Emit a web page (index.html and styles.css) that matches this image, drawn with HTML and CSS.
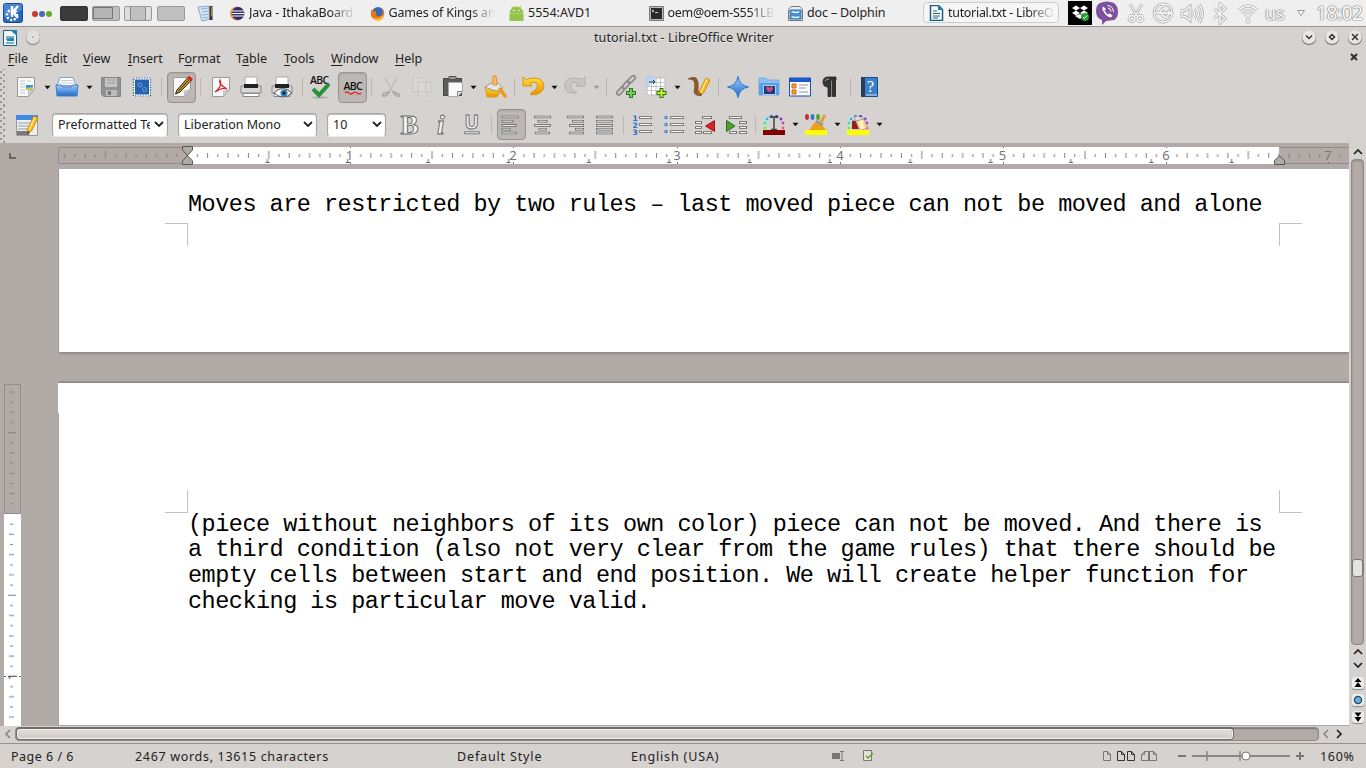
FILE: index.html
```html
<!DOCTYPE html>
<html lang="en">
<head>
<meta charset="utf-8">
<title>tutorial.txt - LibreOffice Writer</title>
<link rel="stylesheet" href="styles.css">
</head>
<body>
<svg class="defs" aria-hidden="true">
  <defs>
    <linearGradient id="blue" x1="0" y1="0" x2="0" y2="1"><stop offset="0" stop-color="#9ccbfa"/><stop offset="1" stop-color="#2669ca"/></linearGradient>
    <linearGradient id="gold" x1="0" y1="0" x2="0" y2="1"><stop offset="0" stop-color="#ffe23b"/><stop offset="1" stop-color="#e79000"/></linearGradient>
    <pattern id="inch" x="129.2" y="0" width="163.25" height="18" patternUnits="userSpaceOnUse">
      <path d="M10.2 8v3M30.6 8v3M51 8v3M71.4 8v3M91.8 8v3M112.2 8v3M132.6 8v3M153 8v3M20.4 7v5M40.8 7v5M61.2 7v5M102 7v5M122.4 7v5M142.8 7v5M81.6 5v8" stroke="#85817f" stroke-width="1"/>
    </pattern>
    <pattern id="tabs" x="169" y="0" width="80.35" height="18" patternUnits="userSpaceOnUse">
      <path d="M38.5 16.5h4M40.5 13v3" stroke="#666" stroke-width="1"/>
    </pattern>
    <pattern id="vinch" x="0" y="130" width="17" height="162.5" patternUnits="userSpaceOnUse">
      <path d="M6 10.2h3M6 30.5h3M6 50.8h3M6 71.1h3M6 91.4h3M6 111.7h3M6 132h3M6 152.3h3M5 20.3h5M5 40.6h5M5 60.9h5M5 101.5h5M5 121.8h5M5 142.1h5M4 81.2h8" stroke="#85817f" stroke-width="1"/>
    </pattern>
    <symbol id="dd" viewBox="0 0 7 5"><path d="M.5.8h6L3.5 4.2z"/></symbol>
    <symbol id="paper" viewBox="0 0 24 24"><path d="M3.500 2.500h17v12l-6 7h-11z" fill="#f8f8f8" stroke="#999"/><path d="M20.500 14.500l-6 7v-5.500z" fill="#ccc" stroke="#aaa" stroke-width=".6"/></symbol>
    <symbol id="pencil" viewBox="0 0 24 24"><path d="M12 21l.5-5L19 3l4 2-6.500 13z" fill="#fcbf24" stroke="#cf860f"/><path d="M20 4l-6 12.500" fill="none" stroke="#ffe982" stroke-width="1.300"/><path d="M12 21.500l.5-3.500 2.500 1z" fill="#444"/></symbol>
    <symbol id="printer" viewBox="0 0 24 24"><path d="M6 2h12v10H6z" fill="#fff" stroke="#aaa"/><path d="M2 11h20v7H2z" fill="#d7d7d7" stroke="#888"/><path d="M5 9h14v4H5z" fill="#222"/><path d="M4 18.500h16v3H4z" fill="#fff" stroke="#888"/></symbol>
    <symbol id="arc" viewBox="0 0 24 24"><g stroke="#fff" stroke-width=".3"><circle cx="3" cy="15" r="1.700" fill="#6e3"/><circle cx="3" cy="10" r="1.700" fill="#2ce0a6"/><circle cx="5" cy="6" r="1.700" fill="#25b9db"/><circle cx="9.500" cy="3.500" r="1.700" fill="#1557d7"/><circle cx="14.500" cy="3.500" r="1.700" fill="#3c24bc"/><circle cx="19" cy="6" r="1.700" fill="#7b35c9"/><circle cx="21" cy="10" r="1.700" fill="#bd3fba"/><circle cx="21" cy="15" r="1.700" fill="#ff467a"/></g></symbol>
  </defs>
</svg>

<header class="taskbar">
  <svg class="kmenu" width="20" height="20" viewBox="0 0 20 20"><rect x=".5" y=".5" width="19" height="19" rx="2" fill="#2467bb" stroke="#174b94"/><path d="M1 1h18v6L1 15z" fill="#5997df" opacity=".65"/><circle cx="9" cy="12" r="5" fill="none" stroke="#fff" stroke-width="2.500" stroke-dasharray="2.200 1.500"/><path d="M9 3v11M15 3l-5 6 5 6" fill="none" stroke="#fff" stroke-width="2.500"/></svg>
  <svg class="dots" width="22" height="8"><circle cx="4" cy="4" r="3" fill="#c83732"/><circle cx="11" cy="4" r="3" fill="#3a70bb"/><circle cx="18" cy="4" r="3" fill="#69a72c"/></svg>
  <div class="pager"><i class="desk on"></i><i class="desk split"><b></b></i><i class="desk cols"></i><i class="desk"></i></div>
  <svg class="notes" width="17" height="17"><path d="M1 2l11-1 2 13-9 2z" fill="#d3e4f6" stroke="#8aa6c2"/><path d="M4 4l8-1M5 7l7-1M5 10l7-1M6 13l6-1" stroke="#8fb0d4"/><path d="M14 1v14" stroke="#333" stroke-width="3"/><path d="M14.500 2v9" stroke="#ae8d3a"/></svg>
  <nav class="tasks">
    <div class="task"><svg width="15" height="15"><circle cx="7" cy="7.500" r="7" fill="#f29a3e"/><circle cx="8" cy="7.500" r="6.500" fill="#302c6a"/><path d="M2 5h12M1.500 7.500h13M2 10h12" stroke="#fff"/></svg><span class="label fade t1">Java - IthakaBoard</span></div>
    <div class="task"><svg width="15" height="15"><circle cx="8" cy="7" r="6" fill="#376ab2"/><path d="M1 3c1 2 3 2 5 2-1 5 2 7 6 4 1-2 1-4 0-7 3 3 3 8 0 11-4 3-9 1-11-3z" fill="#ec751c"/><path d="M3 11q6 4 11-3-1 7-7 7z" fill="#fbc01f"/></svg><span class="label fade t2">Games of Kings an</span></div>
    <div class="task"><svg width="15" height="15"><path d="M1 7a6.500 6 0 0113 0zM1 8h13v7H1zM3 0l2 3M12 0l-2 3" fill="#96c34a" stroke="#96c34a"/><circle cx="5" cy="4.500" r=".8" fill="#fff"/><circle cx="10" cy="4.500" r=".8" fill="#fff"/></svg><span class="label t3">5554:AVD1</span></div>
    <div class="task"><svg width="15" height="15"><path d="M.5.500h14v14H.5z" fill="#bbb" stroke="#777"/><path d="M2 2h11v11H2z" fill="#292929"/><path d="M3 4l2 1-2 1M6 6.500h3" fill="none" stroke="#fff" stroke-width=".8"/></svg><span class="label fade t4">oem@oem-S551LB</span></div>
    <div class="task"><svg width="15" height="15"><path d="M3 .5h9l2.500 3v11H.5v-11z" fill="#eee" stroke="#777"/><path d="M2 4h11v4H2zM2 9h11v4H2z" fill="#68adef" stroke="#286cae"/><path d="M5 5v1.500h5V5M5 10v1.500h5V10" fill="none" stroke="#fff"/></svg><span class="label t5">doc – Dolphin</span></div>
    <div class="task active"><svg width="15" height="16"><path d="M1.500.500h8l4 4v11h-12z" fill="#fff" stroke="#176083" stroke-width="1.500"/><path d="M9 0l5 5H9z" fill="#1d80ae"/><path d="M4 6h4M4 8.500h7M4 11h7M4 13h5" stroke="#176083"/></svg><span class="label fade t6">tutorial.txt - LibreO</span></div>
  </nav>
  <div class="tray">
    <svg width="24" height="24" class="dropbox"><path d="M4 7l4-2.500 4 2.500-4 2.500zM12 7l4-2.500L20 7l-4 2.500zM4 12l4-2.500 4 2.500-4 2.500zM12 12l4-2.500 4 2.500-4 2.500zM7 15l5-2 4 2-4 3z" fill="#fff"/><circle cx="17" cy="16" r="4" fill="#24a12f"/><path d="M15 16l1.500 1.500 2.500-3" fill="none" stroke="#fff"/></svg>
    <svg width="22" height="24" class="viber"><path d="M4 2Q11-1 18 2q4 3 4 9t-4 8l-8 1-4 4v-5Q0 17 0 10q0-6 4-8z" fill="#7e519e"/><path d="M7 5.500q-1.500 2 .5 5 2.500 4.500 6.500 6 2.500-.5 2.500-2l-3-2-2 1-3-4 1.500-1.500z" fill="#fff"/><path d="M11.500 4.500q5.500.5 6 6.500M12 7q3 .5 3 3.500" fill="none" stroke="#fff"/></svg>
    <svg width="18" height="22" class="outline scissors"><g id="t-cut"><path d="M3 2l7 12M15 2L8 14"/><circle cx="5" cy="16.500" r="3"/><circle cx="13" cy="16.500" r="3"/></g><use href="#t-cut" class="core"/></svg>
    <svg width="22" height="22" class="outline usb"><g id="t-usb"><circle cx="11" cy="11" r="9"/><path d="M3 11h15M7 11l3-4h3M9 11l3 4h3M15 8l4 3-4 3"/></g><use href="#t-usb" class="core"/></svg>
    <svg width="24" height="23" class="outline vol"><g id="t-vol"><path d="M2 8.500h3l5-4v14l-5-4H2zM13 7.500q3 4 0 8M16 5q5 6.500 0 13M19 2q7 9.500 0 19"/></g><use href="#t-vol" class="core"/></svg>
    <svg width="16" height="23" class="outline bt"><g id="t-bt"><path d="M2 6.500l11 10-5 4.500V2l5 4.500-11 10"/></g><use href="#t-bt" class="core"/></svg>
    <svg width="22" height="21" class="outline wifi"><g id="t-wifi"><path d="M2 7Q11-1 20 7M5 10.500q6-5 12 0M8 14q3-2.500 6 0"/><circle cx="11" cy="18" r="1"/></g><use href="#t-wifi" class="core"/></svg>
    <span class="glow us">us</span>
    <svg width="10" height="8" class="tri"><path d="M1.500 1.500h7L5 6.500z" fill="#fff" stroke="#999"/></svg>
    <span class="glow clock">18:02</span>
  </div>
</header>

<section class="titlebar">
  <svg class="appicon" width="14" height="16"><path d="M.5.500h9l4 4v11H.5z" fill="#eef8fc" stroke="#176083"/><path d="M7 0h7v6z" fill="#1d80ae"/><path d="M3 7h8M3 9h4M3 13h8" stroke="#176083"/><path d="M8 8h3v3H4v-2z" fill="#2581b0"/></svg>
  <svg class="round" width="16" height="17"><circle cx="8" cy="9" r="7.300" fill="#999"/><circle cx="8" cy="8" r="6.800" fill="#e2e0df"/><circle cx="8" cy="8" r=".8" fill="#777"/></svg>
  <h1 class="caption">tutorial.txt - LibreOffice Writer</h1>
  <div class="winbtns">
    <svg width="16" height="17"><circle cx="8" cy="9" r="7.300" fill="#888"/><circle cx="8" cy="8" r="6.800" fill="#e9e7e5"/><path d="M5 6.500l3 3 3-3" fill="none" stroke="#333" stroke-width="1.500"/></svg>
    <svg width="16" height="17"><circle cx="8" cy="9" r="7.300" fill="#888"/><circle cx="8" cy="8" r="6.800" fill="#e9e7e5"/><path d="M8 5.500L10.500 8 8 10.500 5.500 8z" fill="none" stroke="#333" stroke-width="1.500"/></svg>
    <svg width="16" height="17"><circle cx="8" cy="9" r="7.300" fill="#888"/><circle cx="8" cy="8" r="6.800" fill="#e9e7e5"/><path d="M5 5l6 6M11 5l-6 6" stroke="#333" stroke-width="1.500"/></svg>
  </div>
</section>

<nav class="menubar">
  <span class="mi w1"><u>F</u>ile</span><span class="mi w2"><u>E</u>dit</span><span class="mi w3"><u>V</u>iew</span><span class="mi w4"><u>I</u>nsert</span><span class="mi w5">F<u>o</u>rmat</span><span class="mi w6">T<u>a</u>ble</span><span class="mi w7"><u>T</u>ools</span><span class="mi w8"><u>W</u>indow</span><span class="mi w9"><u>H</u>elp</span>
  <svg class="closedoc" width="8" height="8"><path d="M1 1l6 6M7 1L1 7" stroke="#333" stroke-width="2.200"/></svg>
</nav>

<section class="toolbar">
  <svg class="ic start" viewBox="0 0 24 24"><use href="#paper"/><path d="M6 6h5M6 9h5M6 12h5M6 15h5M6 18h5M13 6h4" stroke="#bcc"/><path d="M12 10h7v5h-7z" fill="#3695df"/><path d="M12 13l7-1v3h-7z" fill="#c8c64a"/></svg>
  <svg class="dd m6"><use href="#dd"/></svg>
  <svg class="ic m4" viewBox="0 0 24 24"><path d="M5 2.500h13l3 8H2z" fill="#fff" stroke="#7aa2cc"/><path d="M6 5.500h12M5 8h14" stroke="#ccc"/><path d="M1 10h5l2 2h8l2-2h5l-1 11H2z" fill="url(#blue)" stroke="#3b7fca"/></svg>
  <svg class="dd m7"><use href="#dd"/></svg>
  <svg class="ic m6" viewBox="0 0 24 24"><path d="M2.500 2.500h19v19h-17l-2-2z" fill="#929292" stroke="#858585"/><path d="M6 3h12v9H6z" fill="#c5c4c3"/><path d="M8 5h8M8 8h8" stroke="#999"/><path d="M7 15h11v6H7z" fill="#bbb"/><path d="M9 16h3v4H9z" fill="#777"/></svg>
  <svg class="ic m7" viewBox="0 0 24 24"><path d="M3 2.500h18v19H3z" fill="#fff"/><path d="M5 4.500h14v15H5z" fill="#2660ae"/><path d="M3.500 3h17v18h-17z" fill="none" stroke="#234b83" stroke-width="1.200" stroke-dasharray="1.300 1.300"/><circle cx="10" cy="10" r="2" fill="none" stroke="#6f9cd8"/><circle cx="14.500" cy="14.500" r="2" fill="none" stroke="#6f9cd8"/></svg>
  <i class="sep m7"></i>
  <span class="press m5"><svg class="ic" viewBox="0 0 24 24"><use href="#paper"/><path d="M5.500 19l1.500-4L18 2.500l3.500 2.500L10 17z" fill="#d9a71e" stroke="#181818"/><path d="M8.500 16L20 3.500" stroke="#222" stroke-width="1"/><path d="M18 2l4 3" stroke="#d22" stroke-width="3"/></svg></span>
  <i class="sep m4"></i>
  <svg class="ic m8" viewBox="0 0 24 24"><use href="#paper"/><path d="M6 17Q14 11 11 5q-2 4 7 9-4-2-12 3z" fill="none" stroke="#d6222a" stroke-width="1.300"/></svg>
  <svg class="ic m6" viewBox="0 0 24 24"><use href="#printer"/></svg>
  <svg class="ic m7" viewBox="0 0 24 24"><use href="#printer"/><path d="M4 18q8-9 18 0-9 8-18 0z" fill="#f1f7fb" stroke="#555"/><circle cx="14" cy="18" r="3.500" fill="#3083c2"/><circle cx="14" cy="18" r="1.500" fill="#111"/></svg>
  <i class="sep m8"></i>
  <svg class="ic m5" viewBox="0 0 24 24"><ellipse cx="12" cy="22.500" rx="8" ry="1" fill="#aaa"/><text x="2" y="9" class="abc">ABC</text><path d="M5 14l6 6 10-11" fill="none" stroke="#25943a" stroke-width="4"/></svg>
  <span class="press m6"><svg class="ic" viewBox="0 0 24 24"><text x="2.500" y="15" class="abc">ABC</text><path d="M4 18q2-2 4 0t4 0 4 0 4 0" fill="none" stroke="#e12b2b" stroke-width="1.200"/></svg></span>
  <i class="sep m4"></i>
  <svg class="ic m7" viewBox="0 0 24 24" fill="none" stroke="#aaa" stroke-width="1.600"><path d="M6 3l8 14M18 3l-8 14" stroke="#c1bfbe"/><path d="M9 17l-4 1.500q-2 1-1 2.500 3 1 6-4zM15 17l4 1.500q2 1 1 2.500-3 1-6-4z"/></svg>
  <svg class="ic m7" viewBox="0 0 24 24" fill="#d9d8d7" stroke="#c6c4c3"><path d="M3 3h13v14H3zM8 7h13v10l-4 4H8z"/><path d="M21 17h-4v4"/></svg>
  <svg class="ic m7" viewBox="0 0 24 24"><path d="M2.500 3.500h18v17h-18z" fill="#5c5d5d" stroke="#444"/><path d="M8 1.500h7v3H8z" fill="#999" stroke="#555"/><path d="M7.500 7.500h14v9l-5 5h-9z" fill="#f8f8f8" stroke="#aaa"/><path d="M21.500 16.500h-5v5" fill="#ddd" stroke="#888"/></svg>
  <svg class="dd m5"><use href="#dd"/></svg>
  <svg class="ic m6" viewBox="0 0 24 24"><path d="M2 12l8 3h8l-4 7H4z" fill="url(#gold)" stroke="#e0a01b"/><path d="M2 12l6-4h7l5 5-4 3-7-1z" fill="#e6e6e6" stroke="#999"/><path d="M10 1h3l1 9h-4z" fill="#fbc06a" stroke="#f08a22"/><path d="M17 14l5 7" stroke="#ef9a14" stroke-width="3.500" stroke-linecap="round"/></svg>
  <i class="sep m7"></i>
  <svg class="ic m6" viewBox="0 0 24 24"><path d="M2 2v9h9L8.500 8.500Q14 6 16 8.500q2 5-6 9.500v2q12 0 13-9Q22 1 8 3.500L5.500 5z" fill="url(#gold)" stroke="#d3960f"/></svg>
  <svg class="dd m6"><use href="#dd"/></svg>
  <svg class="ic m5" viewBox="0 0 24 24"><path d="M22 2v9h-9l2.500-2.500Q10 6 8 8.500q-2 5 6 9.500Q2 19 1.500 11 2 1 16 3.500L18.500 5z" fill="#c8c6c4" stroke="#b0aeac"/></svg>
  <svg class="dd m6 dim"><use href="#dd"/></svg>
  <i class="sep m6"></i>
  <svg class="ic m8" viewBox="0 0 24 24"><g fill="none" stroke="#8a8e8c" stroke-width="1.800"><rect x="1" y="14" width="9" height="4" rx="2" transform="rotate(-50 5.500 16)"/><rect x="6.500" y="8" width="9" height="4" rx="2" transform="rotate(-50 11 10)"/><rect x="12" y="2.500" width="9" height="4" rx="2" transform="rotate(-45 16.500 4.500)"/></g><path d="M16 13v10M11 18h10" stroke="#287a23" stroke-width="4"/><path d="M16 14v8M12 18h8" stroke="#76c956" stroke-width="2"/></svg>
  <svg class="ic m5" viewBox="0 0 24 24"><path d="M3 3h18v17H3z" fill="#fff" stroke="#bbb"/><path d="M3 7.500h18M3 11.500h18M3 15.500h18M7.500 3v17M12 3v17M16.500 3v17" stroke="#c5c5c5"/><path d="M3 1h6v3h3v4H6v4H2V6z" fill="#a9d0fa" opacity=".8"/><path d="M5 7h6M9 5l2 2-2 2" stroke="#333" fill="none"/><path d="M17.500 13v10M12.500 18h10" stroke="#26761b" stroke-width="4"/><path d="M17.500 14v8M13.500 18h8" stroke="#d7e92b" stroke-width="2"/></svg>
  <svg class="dd m6"><use href="#dd"/></svg>
  <svg class="ic m6" viewBox="0 0 24 24"><path d="M1 4q5-3 8-1 3 3 2 12 0 3 4 5-6 2-8-3 2-10-1-12Q4 4 1 4z" fill="#8d5a29" stroke="#644019" stroke-width=".6"/><use href="#pencil"/></svg>
  <i class="sep m7"></i>
  <svg class="ic m7" viewBox="0 0 24 24"><path d="M12 1.500q1.500 9 10.500 10.500Q13.500 13.500 12 22.500 10.500 13.500 1.500 12 10.500 10.500 12 1.500z" fill="url(#blue)" stroke="#2878d2"/></svg>
  <svg class="ic m7" viewBox="0 0 24 24"><path d="M2 3h7l2 2h11v15H2z" fill="#8fbff0" stroke="#79ace0"/><path d="M2 8h20v12H2z" fill="#5d9de2"/><path d="M6.500 10.500h12v9h-12z" fill="#183c80" stroke="#acd3f3"/><path d="M12.500 18v-3M9 13q2-3 3.500 0 1.500-3 3.500 0-1 4-3.500 4T9 13z" fill="#e04b72" stroke="#7a4a93" stroke-width=".6"/></svg>
  <svg class="ic m7" viewBox="0 0 24 24"><path d="M1.500 3h21v18h-21z" fill="#f9fbff" stroke="#174fae"/><path d="M2 3h20v4H2z" fill="#1c59cc"/><path d="M4 9h4v4H4zM4 15h4v4H4z" fill="#efa22d" stroke="#ca6a19"/><path d="M11 10h9M11 13h7M11 17h9" stroke="#999"/></svg>
  <svg class="ic m6" viewBox="0 0 24 24"><path d="M18 2h-8Q5 2 5 7t5 5v9.500h3V5h1.500v16.500h3V5h.5z" fill="#343434" stroke="#222" stroke-width=".8"/><path d="M7 6q1-2 4-2" stroke="#aaa" fill="none"/></svg>
  <i class="sep m8"></i>
  <svg class="ic m7" viewBox="0 0 24 24"><path d="M3.500 2.500h16v19h-16z" fill="#3c7fca" stroke="#174c88"/><path d="M3 2h4v20H3z" fill="#263d5c"/><path d="M8 20h11" stroke="#ddd"/><text x="9" y="17" class="help">?</text></svg>
</section>

<section class="toolbar second">
  <svg class="ic start2" viewBox="0 0 24 24"><path d="M1.500 2.500h21v20h-21z" fill="#edf0f3" stroke="#999"/><path d="M1 2h22v5H1z" fill="#408ae3"/><path d="M3 10h17M3 13h14M3 16h11" stroke="#999"/><path d="M2 18h10l3 4H2z" fill="#778"/><use href="#pencil"/></svg>
  <div class="select s1"><span class="clip c1">Preformatted Te</span><svg class="chev" width="10" height="7"><path d="M1 1l4 4 4-4"/></svg></div>
  <div class="select s2"><span class="clip c2">Liberation Mono</span><svg class="chev" width="10" height="7"><path d="M1 1l4 4 4-4"/></svg></div>
  <div class="select s3"><span class="clip">10</span><svg class="chev" width="10" height="7"><path d="M1 1l4 4 4-4"/></svg></div>
  <svg class="ic m11" viewBox="0 0 24 24"><text x="3.500" y="20.500" class="metal bold">B</text></svg>
  <svg class="ic m8" viewBox="0 0 24 24"><text x="8" y="20.500" class="metal ital">i</text></svg>
  <svg class="ic m7" viewBox="0 0 24 24"><text x="4.500" y="16" class="metal under">U</text><path d="M4.500 18.800h15v2h-15z" fill="#eee" stroke="#666" stroke-width=".8"/></svg>
  <i class="sep m7"></i>
  <span class="press m5"><svg class="ic bars" viewBox="0 0 24 24"><path d="M1.500 4h17M1.500 8.200h12M1.500 12.400h15M1.500 16.200h9M1.500 20h15"/><path d="M2.300 4h15.400M2.300 8.200h10.400M2.300 12.400h13.400M2.300 16.200h7.400M2.300 20h13.400"/></svg></span>
  <svg class="ic m5 bars" viewBox="0 0 24 24"><path d="M3 4h17M6.500 8.200h10M3 12.400h17M7.500 16.200h8M4 20h15"/><path d="M3.800 4h15.400M7.300 8.200h8.400M3.800 12.400h15.400M8.300 16.200h6.400M4.800 20h13.400"/></svg>
  <svg class="ic m8 bars" viewBox="0 0 24 24"><path d="M4 4h17M9 8.200h12M6 12.400h15M12 16.200h9M6 20h15"/><path d="M4.800 4h15.400M9.800 8.200h10.400M6.800 12.400h13.400M12.800 16.200h7.400M6.800 20h13.400"/></svg>
  <svg class="ic m5 bars" viewBox="0 0 24 24"><path d="M4 4h17M4 8.200h17M4 12.400h17M4 16.200h17M4 20h17"/><path d="M4.800 4h15.400M4.800 8.200h15.400M4.800 12.400h15.400M4.800 16.200h15.400M4.800 20h15.400"/></svg>
  <i class="sep m7"></i>
  <svg class="ic m6 bars" viewBox="0 0 24 24"><path d="M9 4.500h13M9 11.500h13M9 18.500h13"/><path d="M9.800 4.500h11.400M9.800 11.500h11.400M9.800 18.500h11.400"/><text x="2.500" y="7.500" class="nums">1</text><text x="2.500" y="14.500" class="nums">2</text><text x="2.500" y="21.500" class="nums">3</text></svg>
  <svg class="ic m8 bars" viewBox="0 0 24 24"><path d="M8 4.500h14M8 11.500h14M8 18.500h14"/><path d="M8.800 4.500h12.400M8.800 11.500h12.400M8.800 18.500h12.400"/><g fill="#5ca3ee" stroke="#2270bb" stroke-width=".5"><circle cx="4" cy="4.500" r="1.500"/><circle cx="4" cy="11.500" r="1.500"/><circle cx="4" cy="18.500" r="1.500"/></g></svg>
  <svg class="ic m7 bars" viewBox="0 0 24 24"><path d="M9 4.500h10M2 9.500h7M2 14.500h7M2 19.500h7M10 19.500h9"/><path d="M10 4.500h8M3 9.500h5M3 14.500h5M3 19.500h5M11 19.500h7"/><path class="red" d="M21.500 7.500v11l-9-5.500z"/></svg>
  <svg class="ic m7 bars" viewBox="0 0 24 24"><path d="M5 4.500h13M15 9.500h8M15 14.500h8M15 19.500h8M5 19.500h8"/><path d="M6 4.500h11M16 9.500h6M16 14.500h6M16 19.500h6M6 19.500h6"/><path class="green" d="M2.500 7.500v11l8.500-5.500z"/></svg>
  <i class="sep m7"></i>
  <svg class="ic m6" viewBox="0 0 24 24"><use href="#arc"/><path d="M7.500 4h9M12 4v12.500M9 16.500h6" stroke="#444" stroke-width="1.500" fill="none"/><path d="M1 17h22v5H1z" fill="#840000"/></svg>
  <svg class="dd m6"><use href="#dd"/></svg>
  <svg class="ic m5" viewBox="0 0 24 24"><ellipse cx="3" cy="4" rx="2" ry="3" fill="#c72f39"/><ellipse cx="8.500" cy="4" rx="2" ry="3" fill="#367bcf"/><ellipse cx="14" cy="4" rx="2" ry="3" fill="#55a632"/><path d="M5 17l6-8 7 3 4 5z" fill="#f1a018"/><path d="M17 9l4-7" stroke="#e79b30" stroke-width="3"/><path d="M12 8l7 4" stroke="#999" stroke-width="3"/><path d="M1 17h22v5H1z" fill="#ff0"/></svg>
  <svg class="dd m6"><use href="#dd"/></svg>
  <svg class="ic m5" viewBox="0 0 24 24"><use href="#arc"/><path d="M6 8l5-1 2 9H6z" fill="#9d1a16"/><path d="M10 8l8-2 3 9-7 3z" fill="#ffdf80" stroke="#aaa"/><path d="M13 8l3-1 2 8-3 1z" fill="#fff3d0"/><path d="M9 3l6 1 3 2-9 2z" fill="#ddd" stroke="#999" stroke-width=".7"/><path d="M1 17h22v5H1z" fill="#ff0"/></svg>
  <svg class="dd m6"><use href="#dd"/></svg>
</section>

<main class="work">
  <aside class="vruler">
    <svg class="corner" width="8" height="6"><path d="M1 0v5h6" fill="none" stroke="#666" stroke-width="2"/></svg>
    <svg class="vscale" width="17" height="342"><path d="M0 130h17v212H0z" fill="#fff"/><path d="M.5.500h16v129H.5z" fill="#b2aaa7" stroke="#8f8c89"/><path d="M0 2h17v288H0zM0 296h17v46H0z" fill="url(#vinch)"/><path d="M0 292.500h2M15 292.500h2" stroke="#666"/><text class="rnum dark" transform="translate(13 292.500) rotate(-90)">1</text></svg>
  </aside>
  <div class="document">
    <div class="hruler">
      <svg width="1291" height="20"><path d="M129 1h1092v17H129z" fill="#fff"/><path d="M1221 1.500h80v16h-80M.5 1.500H129v16H.500z" fill="#b2aaa7" stroke="#8f8c89"/><path d="M2 1h1289v17H2z" fill="url(#inch)"/><path d="M180 1h1040v17H180z" fill="url(#tabs)"/>
        <g class="rnum"><text x="291.500" y="14">1</text><text x="455" y="14">2</text><text x="619" y="14">3</text><text x="782" y="14">4</text><text x="944.500" y="14">5</text><text x="1108" y="14">6</text><text x="1270" y="14">7</text></g>
        <path d="M292.500 1v1m0 14v2M455.500 1v1m0 14v2M619.500 1v1m0 14v2M782.500 1v1m0 14v2M945.500 1v1m0 14v2M1108.500 1v1m0 14v2M1270.500 1v1m0 14v2" stroke="#777"/>
        <path d="M124.500 1v3l5 5.500-5 5.500v3.500h10V15l-5-5.500 5-5.500V.5h-10M1216.500 18.500v-4l5-4.500 5 4.500v4z" fill="#b2aaa7" stroke="#555"/></svg>
    </div>
    <div class="pages">
      <article class="page upper">
        <p class="line first">Moves are restricted by two rules – last moved piece can not be moved and alone</p>
        <div class="marks"><i class="mark tl"></i><i class="mark tr"></i></div>
      </article>
      <article class="page lower">
        <div class="marks"><i class="mark bl"></i><i class="mark br"></i></div>
        <p class="line">(piece without neighbors of its own color) piece can not be moved. And there is<br>a third condition (also not very clear from the game rules) that there should be<br>empty cells between start and end position. We will create helper function for<br>checking is particular move valid.</p>
      </article>
    </div>
  </div>
  <aside class="vscroll">
    <svg width="10" height="7" class="arrow up"><path d="M1 6l4-4 4 4"/></svg>
    <div class="vtrack"><i class="vthumb"></i></div>
    <svg width="10" height="7" class="arrow a2"><path d="M1 6l4-4 4 4"/></svg>
    <svg width="10" height="7" class="arrow a3"><path d="M1 1l4 4 4-4"/></svg>
    <span class="nb n1"><svg width="12" height="12"><path d="M6 1l3.500 4h-7zM6 5l3.500 5h-7z"/></svg></span>
    <span class="nb n2"><svg width="12" height="12"><circle cx="6" cy="6" r="3.600" fill="#6eadd3" stroke="#1e506e" stroke-width="1.300"/></svg></span>
    <span class="nb n3"><svg width="12" height="12"><path d="M2.500 1.500h7L6 6zM2.500 6h7L6 11z"/></svg></span>
  </aside>
</main>

<div class="hscroll">
  <svg width="7" height="10" class="arrow dimmed"><path d="M6 1L2 5l4 4"/></svg>
  <div class="htrack"><i class="hthumb"></i></div>
  <svg width="7" height="10" class="arrow dimmed h2"><path d="M6 1L2 5l4 4"/></svg>
  <svg width="7" height="10" class="arrow h3"><path d="M1 1l4 4-4 4"/></svg>
</div>

<footer class="status">
  <span class="st p1">Page 6 / 6</span><span class="st p2">2467 words, 13615 characters</span><span class="st p3">Default Style</span><span class="st p4">English (USA)</span>
  <svg class="ins" width="12" height="10"><path d="M0 2h8v6H0z" fill="#777"/><path d="M8 .5h4M10 0v9M8 9.500h4" stroke="#777"/></svg>
  <svg class="chk" width="12" height="14"><path d="M.5 1.500h8v10h-8z" fill="#e4e1de" stroke="#777"/><path d="M3 7l2 2 5-5" fill="none" stroke="#62a822" stroke-width="1.500"/></svg>
  <svg class="views" width="56" height="12" fill="none" stroke="#777"><path d="M1.500 1.500h4l3 3v6h-7zM5.500 1.500v3h3"/><path d="M15.500 1.500h4l3 3v6h-7zM19.500 1.500v3h3M25.500 1.500h4l3 3v6h-7zM29.500 1.500v3h3" stroke="#333"/><path d="M46.500 1.500h-4l-3 3v6h7zM42.500 1.500v3h-3M47.500 1.500h4l3 3v6h-7zM51.500 1.500v3h3"/></svg>
  <svg class="zoom" width="136" height="14"><path d="M5 7h8M123 7h8M127 3v8" stroke="#777" stroke-width="2"/><path d="M19 7h98" stroke="#8b8784" stroke-width="2"/><path d="M34 2v10M67 2v10" stroke="#8b8784" stroke-width="1.500"/><circle cx="73" cy="7" r="4" fill="#fff" stroke="#777"/></svg>
  <span class="st pct">160%</span>
</footer>
</body>
</html>
```
FILE: styles.css
```css
* { box-sizing: border-box; }
body { margin: 0; width: 1366px; height: 768px; overflow: hidden; display: flex; flex-direction: column; background: #d6d2d0; color: #222; font: 12.5px "Noto Sans", "Open Sans", sans-serif; }
svg { display: block; flex: none; }
.defs { width: 0; height: 0; position: absolute; }

.taskbar { height: 27px; display: flex; align-items: center; background: #f0efef; border-bottom: 1px solid #999695; flex: none; }
.kmenu { margin-left: 3px; }
.dots { margin-left: 8px; margin-top: 2px; }
.pager { display: flex; gap: 4px; margin-left: 7px; }
.desk { width: 28px; height: 15px; border: 1px solid #999; border-radius: 2px; background: #bfbfbf; }
.desk.on { background: #3b3b3b; border-color: #333; }
.desk.split b { display: block; width: 20px; height: 12px; border: 1px solid #777; background: #b4b4b4; }
.desk.cols { background: linear-gradient(90deg, #dedede 5px, #888 5px 6px, #c0c0c0 6px 20px, #888 20px 21px, #dedede 21px); }
.desk:last-child { margin-left: 1px; }
.notes { margin-left: 12px; }
.tasks { display: flex; align-items: center; margin-left: 16px; width: 828px; }
.task { display: flex; align-items: center; gap: 4px; width: 139.500px; height: 24px; color: #222; flex: none; }
.task:nth-child(5) { width: 135px; }
.task.active { width: 136px; height: 21px; border: 1px solid #ccc; border-radius: 4px; padding-left: 5px; margin-bottom: 1px; background: #f6f6f6; }
.label { white-space: nowrap; line-height: 20px; }
.fade { width: 107px; -webkit-mask-image: linear-gradient(90deg, #000 75%, transparent); mask-image: linear-gradient(90deg, #000 75%, transparent); }
.t1 { letter-spacing: -.15px; }
.t2 { letter-spacing: -.15px; }
.t4 { letter-spacing: -.3px; }
.t5 { letter-spacing: -.15px; }
.t6 { letter-spacing: -.3px; }
.tray { display: flex; align-items: center; height: 26px; margin-left: 10px; }
.dropbox { background: #000; }
.viber { margin-left: 4px; }
.outline { fill: none; stroke: #aaa; stroke-width: 2.800; }
.core { stroke: #fcfcfc; stroke-width: 1.300; }
.scissors { margin-left: 9px; }
.usb { margin-left: 7px; }
.vol { margin-left: 6px; }
.bt { margin-left: 8px; }
.wifi { margin-left: 9px; }
.glow { color: #fff; text-shadow: 0 0 1px #666, 0 0 1px #777, 0 0 2px #999; font-size: 18px; line-height: 24px; white-space: nowrap; }
.us { margin-left: 6px; width: 22px; }
.tri { margin-left: 9px; }
.clock { margin-left: 10px; font-size: 19px; letter-spacing: -.4px; }

.titlebar { height: 21px; display: flex; align-items: center; flex: none; }
.appicon { margin-left: 3px; }
.round { margin-left: 8px; }
.caption { margin: 0; font-size: 12.500px; font-weight: 400; width: 182px; margin-left: 553px; white-space: nowrap; line-height: 20px; text-shadow: 0 1px 0 #eee; letter-spacing: .1px; }
.winbtns { display: flex; gap: 7px; margin-left: 525px; margin-bottom: 1px; }

.menubar { height: 21px; display: flex; align-items: center; padding-left: 8px; flex: none; }
.mi { line-height: 20px; white-space: nowrap; }
.mi u { text-underline-offset: 2px; text-decoration-thickness: 1px; }
.w1 { width: 37px; } .w2 { width: 38px; } .w3 { width: 45px; } .w4 { width: 50px; } .w5 { width: 58px; }
.w6 { width: 48px; } .w7 { width: 47px; } .w8 { width: 64px; } .w9 { width: 954px; }
.closedoc { margin-left: 1px; margin-bottom: 3px; }

.toolbar { height: 37px; padding-bottom: 1px; display: flex; align-items: center; flex: none; background: radial-gradient(circle at 1px 1px, #999 .9px, transparent 1.200px) 0 2px / 4px 6px repeat-y, radial-gradient(circle at 1px 1px, #999 .9px, transparent 1.200px) 3px 5px / 4px 6px repeat-y; }
.second { padding-bottom: 0; }
.ic { width: 24px; height: 24px; overflow: visible; }
.dd { width: 7px; height: 5px; fill: #111; }
.dim { fill: #999; }
.start { margin-left: 14px; }
.start2 { margin-left: 15px; }
.sep { width: 1px; height: 18px; background: #bab6b4; flex: none; }
.press { width: 29px; height: 31px; display: flex; align-items: center; justify-content: center; flex: none; background: #bdb8b5; border: 1px solid #989390; border-radius: 4px; box-shadow: inset 0 1px 2px #aaa5a2; }
.m4 { margin-left: 4px; } .m5 { margin-left: 5px; } .m6 { margin-left: 6px; } .m7 { margin-left: 7px; } .m8 { margin-left: 8px; } .m11 { margin-left: 11px; }
.abc { font: 600 10.500px "Open Sans", "Noto Sans", sans-serif; letter-spacing: -.7px; fill: #111; }
.help { font: 16px "Liberation Serif", serif; fill: #fff; }
.select { height: 24px; border: 1px solid #aaa6a3; border-bottom-color: #eee; border-radius: 4px; background: #fff; display: flex; align-items: center; justify-content: space-between; padding: 0 3px 0 5px; box-shadow: inset 0 1px 1px #bbb; flex: none; }
.s1 { width: 116px; margin-left: 13px; }
.s2 { width: 139px; margin-left: 10px; }
.s3 { width: 59px; margin-left: 10px; }
.clip { white-space: nowrap; line-height: 20px; }
.c1 { width: 92px; overflow: hidden; }
.chev { fill: none; stroke: #222; stroke-width: 1.800; }
.metal { fill: #f4f4f4; stroke: #666; stroke-width: .9; }
.bold { font: bold 27px "Liberation Serif", serif; }
.ital { font: italic bold 27px "Liberation Serif", serif; }
.under { font: bold 19px "Noto Sans", sans-serif; }
.bars path:first-child { stroke: #666; stroke-width: 2.600; }
.bars path:nth-child(2) { stroke: #f7f7f7; stroke-width: 1; }
.nums { font: bold 7.500px "DejaVu Sans", sans-serif; fill: #276fc4; }
.red { fill: #d9222a; stroke: #a11515; }
.green { fill: #4aa12d; stroke: #2b701b; }

.work { height: 583px; display: flex; flex: none; background: #b2aaa7; }
.vruler { width: 58px; padding-left: 4px; }
.corner { margin: 10px 0 0 5px; }
.vscale { margin-top: 225px; }
.document { width: 1291px; overflow: hidden; }
.hruler { height: 26px; padding-top: 3px; }
.rnum { font: 13px "Noto Sans", sans-serif; fill: #777; text-anchor: middle; }
.dark { fill: #444; }
.pages { height: 557px; display: flex; flex-direction: column; gap: 32px; overflow: hidden; }
.page { background: #fff; flex: none; }
.upper { height: 183px; margin-left: 1px; box-shadow: 0 1px 3px #777; padding-top: 23px; }
.lower { height: 342px; margin-top: -1px; box-shadow: 0 -1px 2px #777; padding: 107px 0 0 1px; background: linear-gradient(#fff 30px, #aaa5a2 30px) 0 0 / 1px 100% no-repeat, #fff; }
.line { margin: 0 0 0 129px; font: 23.500px/25.700px "Liberation Mono", monospace; letter-spacing: -.506px; color: #000; white-space: nowrap; }
.lower .line { margin-top: -1.500px; }
.marks { display: flex; justify-content: space-between; width: 1137px; margin-left: 106px; height: 23px; }
.first { height: 31px; }
.mark { width: 23px; height: 23px; border: 0 solid #c3c3c3; }
.tl { border-width: 1px 1px 0 0; }
.tr { border-width: 1px 0 0 1px; }
.bl { border-width: 0 1px 1px 0; }
.br { border-width: 0 0 1px 1px; }
.vscroll { width: 17px; background: #d6d2d0; display: flex; flex-direction: column; align-items: center; }
.arrow { fill: none; stroke: #222; stroke-width: 1.700; }
.up { margin-top: 5px; }
.vtrack { width: 13px; height: 486px; margin-top: 4px; border: 1px solid #8e8986; border-radius: 4px; background: #b2aaa7; box-shadow: inset 0 1px 2px #8a8582; padding: 399px 0 0 0; }
.vthumb { display: block; width: 11px; height: 18px; border: 1px solid #777; border-radius: 3px; background: #e5e3e1; }
.a2 { margin-top: 3px; }
.a3 { margin-top: 7px; }
.nb { width: 12px; height: 12px; border-radius: 3px; background: #efeeec; box-shadow: 0 1px 1px #888; }
.n1 { margin-top: 8px; }
.n2 { margin-top: 5px; }
.n3 { margin-top: 5px; }

.hscroll { height: 17px; display: flex; align-items: center; padding: 0 0 2px 4px; flex: none; }
.htrack { width: 1304px; height: 14px; margin-left: 4px; border: 1px solid #8e8986; border-radius: 4px; background: #b2aaa7; box-shadow: inset 0 1px 1px #777; flex: none; }
.hthumb { display: block; width: 1218px; height: 13px; margin-top: -1px; border: 1px solid #716d6b; border-top-width: 2px; border-radius: 4px; background: linear-gradient(#dfdcda, #cfcbc8); box-shadow: inset 0 0 0 1px #f3f1ef; }
.dimmed { stroke: #888; }
.h2 { margin-left: 3px; }
.h3 { margin-left: 7px; }
.status { height: 25px; border-top: 1px solid #969290; display: flex; align-items: center; padding-left: 11px; flex: none; }
.st { white-space: nowrap; line-height: 20px; letter-spacing: .68px; padding-top: 1px; }
.p1 { width: 124px; letter-spacing: .5px; } .p2 { width: 322px; } .p3 { width: 174px; letter-spacing: .85px; } .p4 { width: 201px; letter-spacing: .85px; }
.chk { margin-left: 19px; }
.views { margin-left: 227px; }
.zoom { margin-left: 15px; }
.pct { margin-left: 11px; }
```
